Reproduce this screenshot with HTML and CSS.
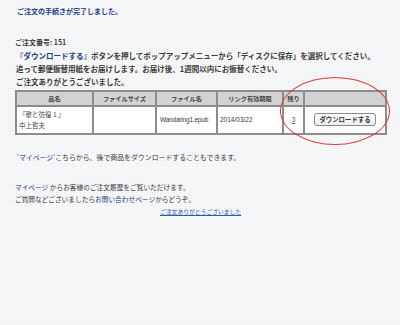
FILE: index.html
```html
<!DOCTYPE html>
<html lang="ja">
<head>
    <meta charset="UTF-8">
    <title>ご注文完了</title>
    <link rel="stylesheet" href="styles.css">
</head>
<body>
    <div class="page">
        <h1 class="title">ご注文の手続きが完了しました。</h1>

        <p class="orderNo">ご注文番号: 151</p>

        <div class="notice">
            <p><span class="navy">『ダウンロードする』</span>ボタンを押してポップアップメニューから「ディスクに保存」を選択してください。</p>
            <p>追って郵便振替用紙をお届けします。お届け後、1週間以内にお振替ください。</p>
            <p>ご注文ありがとうございました。</p>
        </div>

        <table class="items">
            <colgroup>
                <col class="cName">
                <col class="cSize">
                <col class="cFile">
                <col class="cDate">
                <col class="cLeft">
                <col class="cBtn">
            </colgroup>
            <thead>
                <tr>
                    <th>品名</th>
                    <th>ファイルサイズ</th>
                    <th>ファイル名</th>
                    <th>リンク有効期限</th>
                    <th>残り</th>
                    <th></th>
                </tr>
            </thead>
            <tbody>
                <tr>
                    <td class="name">『歌と彷徨 1 』<br>中上哲夫</td>
                    <td></td>
                    <td class="file">Wandaring1.epub</td>
                    <td class="date">2014/03/22</td>
                    <td class="left"><a href="#">3</a></td>
                    <td class="btnCell"><button class="dl">ダウンロードする</button></td>
                </tr>
            </tbody>
        </table>

        <!-- 赤い丸 -->
        <div class="mark"></div>

        <p class="later"><span class="navy">'マイページ'</span>こちらから、後で商品をダウンロードすることもできます。</p>

        <div class="info">
            <p><span class="navy">マイページ</span> からお客様のご注文履歴をご覧いただけます。</p>
            <p>ご質問などございましたら<span class="navy">お問い合わせページ</span>からどうぞ。</p>
            <p class="thanks"><a href="#">ご注文ありがとうございました</a></p>
        </div>
    </div>
</body>
</html>
```

FILE: styles.css
```css
*{
    margin: 0;
    padding: 0;
    box-sizing: border-box;
}
html, body{
    height: 100%;
}
body{
    font-family: "Noto Sans CJK JP", "Noto Sans", sans-serif;
    color: #3a3a3a;
    background-color: #fbfbfc;
    background-image:
        linear-gradient(90deg, rgba(210,215,225,.16) 1px, transparent 1px),
        linear-gradient(rgba(210,215,225,.16) 1px, transparent 1px);
    background-size: 2px 2px;
}
.page{
    position: relative;
    padding: 6px 15px 0 15px;
}
.navy{
    color: #1c3c86;
}
.title{
    font-size: 7px;
    line-height: 11px;
    font-weight: bold;
    color: #1c3c86;
    margin-left: 2px;
}
.orderNo{
    margin-top: 20px;
    font-size: 7px;
    line-height: 11px;
    font-weight: bold;
}
.notice{
    margin-top: 1px;
    margin-left: 1px;
    font-size: 7.5px;
    line-height: 13px;
    font-weight: bold;
}
.items{
    margin-top: 1.5px;
    width: 370px;
    table-layout: fixed;
    border-collapse: collapse;
    background: #fff;
}
.cName{ width: 77px; }
.cSize{ width: 63px; }
.cFile{ width: 61px; }
.cDate{ width: 66px; }
.cLeft{ width: 21px; }
.cBtn{ width: 82px; }
.items th, .items td{
    border: 2px solid #8c8c8c;
}
.items th{
    background: #d2d2d2;
    height: 15px;
    font-size: 6.2px;
    font-weight: bold;
    color: #444;
    text-align: center;
}
.items td{
    height: 28px;
    font-size: 6.5px;
    line-height: 11px;
    vertical-align: middle;
}
.name{
    padding-left: 2px;
}
.file{
    font-family: "Liberation Sans", sans-serif;
    font-size: 6.4px;
    letter-spacing: -0.2px;
    padding-left: 3px;
}
.date{
    font-family: "Liberation Sans", sans-serif;
    font-size: 7px;
    padding-left: 2px;
}
.left{
    text-align: center;
    font-family: "Liberation Sans", sans-serif;
    font-size: 7px;
}
.left a{
    color: #2a5db0;
}
.btnCell{
    text-align: center;
}
.dl{
    font-family: "Noto Sans CJK JP", sans-serif;
    font-size: 6.4px;
    font-weight: bold;
    color: #333;
    background: linear-gradient(#ffffff, #ececec);
    border: 1px solid #8a8a8a;
    border-radius: 3px;
    padding: 1px 4px;
    line-height: 9px;
}
.mark{
    position: absolute;
    left: 280px;
    top: 77px;
    width: 110px;
    height: 68px;
    border: 1px solid #e23a3a;
    border-radius: 50%;
}
.later{
    margin-top: 17px;
    margin-left: 2px;
    font-size: 6.9px;
    line-height: 11px;
}
.info{
    margin-top: 18px;
    font-size: 6.7px;
    line-height: 12.5px;
}
.thanks{
    padding-left: 145px;
    font-size: 5.8px;
}
.thanks a{
    color: #2a5db0;
}
```
